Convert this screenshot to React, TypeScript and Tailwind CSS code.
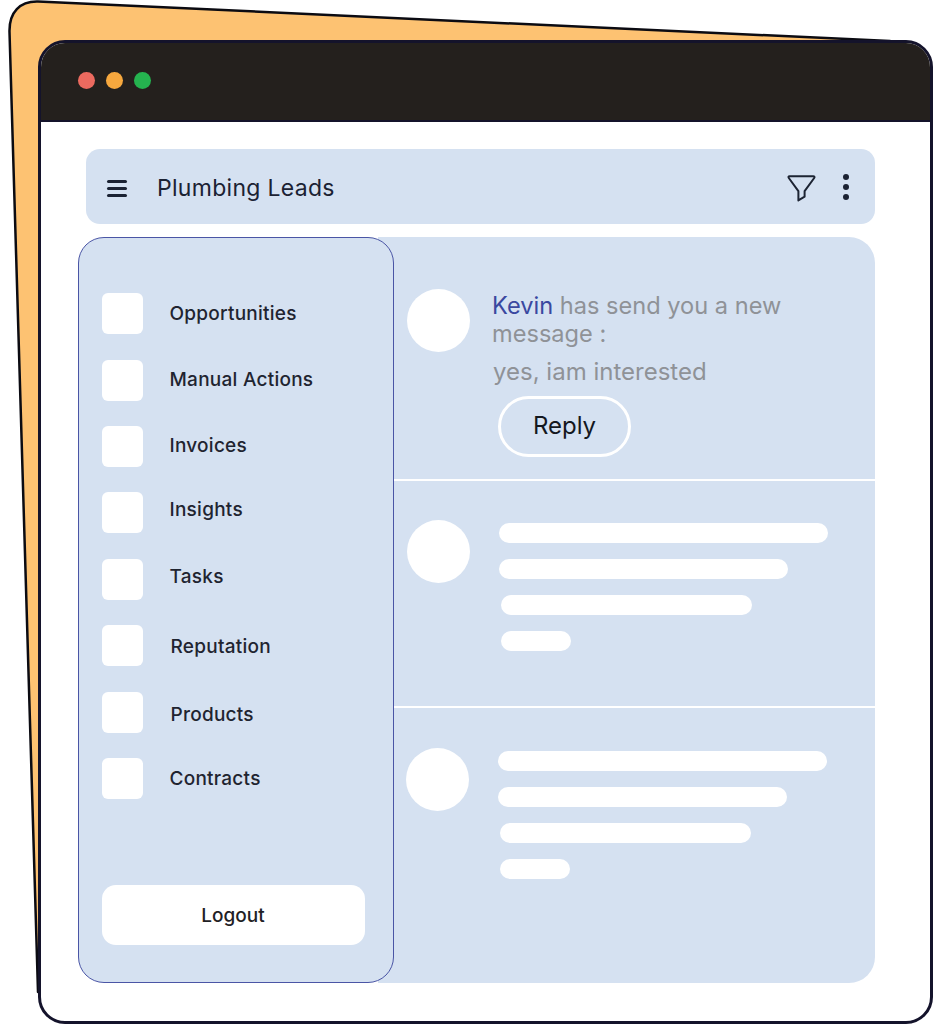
const navItems = [
  { label: 'Opportunities', rowClass: 'mb-[26px]', labelClass: 'ml-[27px] mt-[3px]' },
  { label: 'Manual Actions', rowClass: 'mb-[25px]', labelClass: 'ml-[27px] mt-[1px]' },
  { label: 'Invoices', rowClass: 'mb-[25px]', labelClass: 'ml-[27px] mt-[1px]' },
  { label: 'Insights', rowClass: 'mb-[26px]', labelClass: 'ml-[27px] -mt-[3px]' },
  { label: 'Tasks', rowClass: 'mb-[25px]', labelClass: 'ml-[27px] -mt-[3px]' },
  { label: 'Reputation', rowClass: 'mb-[26px]', labelClass: 'ml-[28px] mt-[5px]' },
  { label: 'Products', rowClass: 'mb-[25px]', labelClass: 'ml-[28px] mt-[7px]' },
  { label: 'Contracts', rowClass: '', labelClass: 'ml-[27px] mt-[3px]' },
]

function Hamburger() {
  return (
    <div className="mt-[4px] flex w-[20px] flex-col gap-[4px]">
      <span className="h-[3px] rounded-sm bg-[#1b2233]" />
      <span className="h-[3px] rounded-sm bg-[#1b2233]" />
      <span className="h-[3px] rounded-sm bg-[#1b2233]" />
    </div>
  )
}

function FilterIcon() {
  return (
    <svg className="mt-[3px]" width="29" height="28" viewBox="0 0 29 28" fill="none">
      <path
        d="M2.6 2.2H26.2C27.4 2.2 27.9 3.1 27.2 4L17.6 17.2V22.7L11.4 26.4V17.2L1.8 4C1.1 3.1 1.5 2.2 2.6 2.2Z"
        stroke="#1d2433"
        strokeWidth="2"
        strokeLinejoin="round"
      />
    </svg>
  )
}

function SkeletonRow({ rowClass, bars }: { rowClass: string; bars: string[] }) {
  return (
    <div className={rowClass}>
      <div className="h-[63px] w-[63px] shrink-0 rounded-full bg-white" />
      <div className="ml-[29px] flex flex-col gap-[16px]">
        {bars.map((bar) => (
          <div key={bar} className={`h-[20px] rounded-full bg-white ${bar}`} />
        ))}
      </div>
    </div>
  )
}

export default function App() {
  return (
    <div className="relative h-[1024px] w-[943px] overflow-hidden bg-white pl-[38px] pt-[40px] font-['Inter','Noto_Sans',sans-serif]">
      <svg className="absolute left-0 top-0" width="943" height="1024" viewBox="0 0 943 1024" fill="none">
        <path
          d="M9.5 32C9 12 20 1 38 1.5L890 41V600L38 992Z"
          fill="#fdc272"
          stroke="#0b0b12"
          strokeWidth="2.5"
          strokeLinejoin="round"
        />
      </svg>

      <div className="relative h-[984px] w-[895px] overflow-hidden rounded-[27px] border-[3px] border-[#14132b] bg-white">
        <div className="flex h-[79px] items-center gap-[11px] border-b-[2px] border-[#14132b] bg-[#24201d] pb-[2px] pl-[37px]">
          <span className="h-[17px] w-[17px] rounded-full bg-[#ec6a5f]" />
          <span className="h-[17px] w-[17px] rounded-full bg-[#f7a83e]" />
          <span className="h-[17px] w-[17px] rounded-full bg-[#25b34f]" />
        </div>

        <div className="pl-[37px] pt-[27px]">
          <div className="ml-[8px] flex h-[75px] w-[789px] items-center rounded-[14px] bg-[#d5e1f1] pl-[21px] pr-[26px]">
            <Hamburger />
            <h1 className="ml-[30px] mt-[3px] text-[23px] font-normal tracking-[0.3px] text-[#1b2233]">Plumbing Leads</h1>
            <div className="ml-auto flex items-center gap-[27px]">
              <FilterIcon />
              <div className="mt-[1px] flex flex-col gap-[4px]">
                <span className="h-[6px] w-[6px] rounded-full bg-[#1b2233]" />
                <span className="h-[6px] w-[6px] rounded-full bg-[#1b2233]" />
                <span className="h-[6px] w-[6px] rounded-full bg-[#1b2233]" />
              </div>
            </div>
          </div>

          <div className="mt-[13px] flex h-[746px]">
            <aside className="relative z-10 flex h-[746px] w-[316px] shrink-0 flex-col rounded-[26px] border-[1.5px] border-[#4a55a5] bg-[#d5e1f1] pl-[22.5px] pt-[54.5px]">
              {navItems.map((item) => (
                <div key={item.label} className={`flex items-center ${item.rowClass}`}>
                  <div className="h-[41px] w-[41px] shrink-0 rounded-[6px] bg-white" />
                  <span className={`text-[19px] font-[450] tracking-[0.25px] text-[#1f2430] ${item.labelClass}`}>
                    {item.label}
                  </span>
                </div>
              ))}
              <button
                type="button"
                className="mt-[86px] h-[60px] w-[263px] rounded-[14px] bg-white pt-[4px] text-[19px] font-[450] text-[#1f2125]"
              >
                Logout
              </button>
            </aside>

            <section className="-ml-[16px] flex w-[497px] flex-col rounded-r-[26px] bg-[#d5e1f1]">
              <div className="flex h-[244px] shrink-0 border-b-[2px] border-white pl-[29px] pt-[52px]">
                <div className="h-[63px] w-[63px] shrink-0 rounded-full bg-white" />
                <div className="ml-[22px] pt-[3px]">
                  <p className="w-[310px] text-[23.6px] leading-[28px] text-[#8f9297]">
                    <span className="text-[#3a48a0]">Kevin</span> has send you a new message :
                  </p>
                  <p className="ml-[1px] mt-[10px] text-[24px] leading-[28px] text-[#8f9297]">yes, iam interested</p>
                  <button
                    type="button"
                    className="ml-[6px] mt-[10px] h-[61px] w-[133px] rounded-full border-[3px] border-white pb-[2px] text-[24px] font-normal text-[#14181f]"
                  >
                    Reply
                  </button>
                </div>
              </div>

              <SkeletonRow
                rowClass="flex h-[227px] shrink-0 border-b-[2px] border-white pl-[29px] pt-[39px]"
                bars={['mt-[3px] w-[329px]', 'w-[289px]', 'ml-[2px] w-[251px]', 'ml-[2px] w-[70px]']}
              />
              <SkeletonRow
                rowClass="flex pl-[28px] pt-[40px]"
                bars={['mt-[3px] w-[329px]', 'w-[289px]', 'ml-[2px] w-[251px]', 'ml-[2px] w-[70px]']}
              />
            </section>
          </div>
        </div>
      </div>
    </div>
  )
}
